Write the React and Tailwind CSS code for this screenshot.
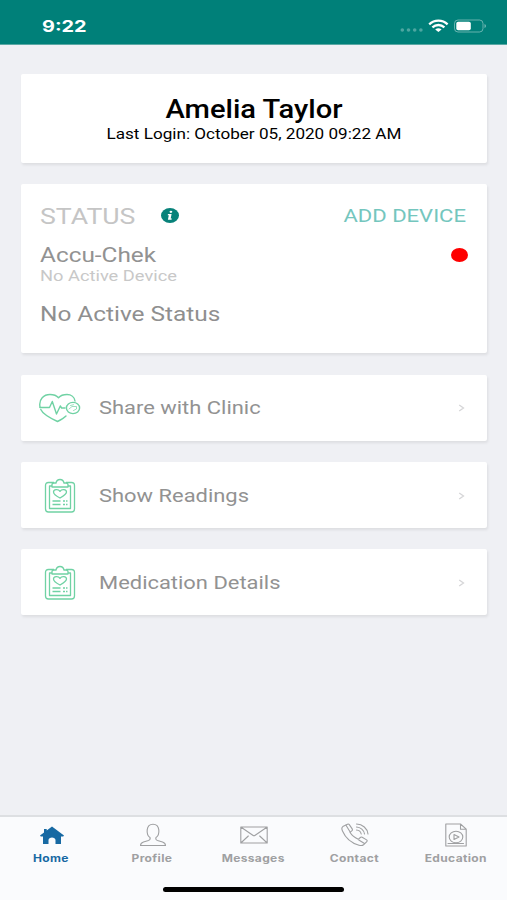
import React from 'react';

const left = 'block w-fit origin-left whitespace-nowrap';
const card = 'bg-white rounded-[2px] shadow-[1px_2px_3px_rgba(0,0,0,0.08)]';

function HeartIcon() {
  return (
    <svg className="h-[30px] w-[42px]" viewBox="0 0 42 30" fill="none" stroke="#70d2a4" strokeWidth="1.400" strokeLinecap="round" strokeLinejoin="round">
      <path d="M1 14C-.5 6 5 1.500 11 1.500c4 0 6.500 1 8.500 3.200C21.500 2.500 24 1.500 28 1.500c4 0 7.500 2.500 8 6.500" />
      <path d="M1.800 16.500C4 21.500 11 25 18.500 28.500c3-1.500 6-3 8.500-5.500" />
      <path d="M1 14.500h9.500l2.800-6L17.500 21l3.800-8 1.300 2H26" />
      <ellipse cx="34" cy="15" rx="6.600" ry="5.600" />
      <path d="M30 16l3-2.500h4.500V16l-3 1.500M31.500 12.500l3-.8" strokeWidth=".7" />
    </svg>
  );
}

function ClipboardIcon() {
  return (
    <svg className="h-[36px] w-[32px]" viewBox="0 0 32 36" fill="none" stroke="#70d2a4" strokeWidth="1.300" strokeLinejoin="round">
      <path d="M10 4.500H4.500C2.500 4.500 1.500 5.500 1.500 7.500v23.500c0 2 1 3 3 3h23c2 0 3-1 3-3V7.500c0-2-1-3-3-3H22" />
      <path d="M8 8H5.500V30.500h21V8H24" />
      <path d="M8 9V6.500c0-1 .7-1.500 2-1.500h2c.5-2.500 2-3.500 4-3.500s3.500 1 4 3.500h2c1.300 0 2 .5 2 1.500V9z" />
      <path d="M16 20c-4.500-2.300-6.500-3.900-6.500-6 0-2.900 4.800-3.200 6.500-.6 1.700-2.600 6.500-2.300 6.500.6 0 2.100-2.500 3.700-6.500 6z" />
      <path d="M8.500 23h8M8.500 26.500h8M19 23h2M22 23h1.500M19 26.500h2M22 26.500h1.500" />
    </svg>
  );
}

function Row({ icon, children }) {
  return (
    <div className={`${card} flex h-[66px] items-center pl-[17px] pr-[22px] pt-px`}>
      <div className="flex w-[43px] justify-center">{icon}</div>
      <div className="ml-[18px] flex-1 text-[18.500px] leading-6 text-[#929292]">
        <span className={`${left} scale-x-[1.185]`}>{children}</span>
      </div>
      <svg className="h-2 w-[7px]" viewBox="0 0 7 8" fill="none" stroke="#d6d6d8" strokeWidth="1.300">
        <path d="M1.200 1 5.500 4 1.200 7" />
      </svg>
    </div>
  );
}

function Tab({ icon, label, active }) {
  return (
    <div className={`flex flex-1 flex-col items-center ${active ? 'text-[#1769a3]' : 'text-[#9fa0a2]'}`}>
      <div className="flex h-[26px] items-center">{icon}</div>
      <span className="mt-[3px] block scale-x-[1.2] pr-[1px] text-[10px] font-bold leading-[14px] tracking-[0.300px]">{label}</span>
    </div>
  );
}

const line = { fill: 'none', stroke: 'currentColor', strokeWidth: 1.1, strokeLinejoin: 'round', strokeLinecap: 'round' };

export default function App() {
  return (
    <div className="flex h-[900px] w-[507px] flex-col overflow-hidden bg-[#eff0f4] font-['Roboto',sans-serif]">
      <header className="flex h-[45px] items-center justify-between border-b border-[#5aa8a4] bg-[#008079] pl-[42px] pr-[20px] pt-[7px]">
        <span className="block origin-left scale-x-[1.240] font-['Inter',sans-serif] text-[16px] font-bold leading-5 text-white">9:22</span>
        <svg className="h-[16px] w-[88px]" viewBox="0 0 88 16">
          <g fill="#fff" fillOpacity=".3">
            <circle cx="3.300" cy="12" r="1.800" /><circle cx="9.500" cy="12" r="1.800" /><circle cx="15.700" cy="12" r="1.800" /><circle cx="21.900" cy="12" r="1.800" />
          </g>
          <g transform="translate(-.6 0)">
            <g fill="none" stroke="#fff" strokeWidth="2.300">
              <path d="M30.800 6.300C36 1.400 44 1.400 49.200 6.300" />
              <path d="M34 9.400c3.500-3.200 8.500-3.200 12 0" />
            </g>
            <path d="M36.800 11.500c2-1.600 4.400-1.600 6.400 0L40 14.100z" fill="#fff" />
          </g>
          <rect x="55.500" y="2" width="28.500" height="12" rx="3.500" fill="none" stroke="#fff" strokeOpacity=".4" />
          <rect x="57.300" y="3.700" width="14.500" height="8.600" rx="1.800" fill="#fff" />
          <path d="M85.500 6c2 .8 2 3.200 0 4z" fill="#fff" fillOpacity=".45" />
        </svg>
      </header>

      <main className="flex flex-1 flex-col gap-[21.300px] pl-[21px] pr-[20px] pt-[28.700px]">
        <section className={`${card} flex h-[89px] flex-col items-center pt-[21px] text-black`}>
          <h1 className="scale-x-[1.165] whitespace-nowrap text-[25px] font-medium leading-[30px]">Amelia Taylor</h1>
          <p className="scale-x-[1.180] whitespace-nowrap text-[14.500px] leading-[20px]">Last Login: October 05, 2020 09:22 AM</p>
        </section>

        <section className={`${card} flex h-[169.500px] flex-col pl-[19px] pr-[20px] pt-[18px]`}>
          <div className="flex h-[28px] items-center">
            <div className="w-[121px] pt-[2px] text-[22.500px] text-[#c5c5c5]"><span className={`${left} scale-x-[1.185]`}>STATUS</span></div>
            <svg className="h-[15px] w-[18px]" viewBox="0 0 18 15">
              <ellipse cx="9" cy="7.500" rx="9" ry="7.500" fill="#08827a" />
              <g fill="#fff"><ellipse cx="9.900" cy="3.800" rx="1.400" ry="1.100" /><path d="M7 6h3.600L9.700 10.600h1.200l-.4 1.200H6.900l.9-4.600H6.700z" /></g>
            </svg>
            <span className="ml-auto mr-px block origin-right scale-x-[1.190] whitespace-nowrap pt-[2px] text-[18.500px] text-[#74c6be]">ADD DEVICE</span>
          </div>
          <div className="mt-[12px] flex h-[26px] items-center justify-between text-[21px] text-[#929292]">
            <span className={`${left} scale-x-[1.160] pt-[2px]`}>Accu-Chek</span>
            <span className="mr-[-1px] block h-[14.500px] w-[17.500px] rounded-[50%] bg-[#fe0000]" />
          </div>
          <div className="pt-px text-[14.500px] leading-[16px] text-[#c8c8c8]"><span className={`${left} scale-x-[1.260]`}>No Active Device</span></div>
          <div className="mt-[16px] text-[20.500px] leading-[26px] text-[#8f8f8f]"><span className={`${left} scale-x-[1.190]`}>No Active Status</span></div>
        </section>

        <Row icon={<HeartIcon />}>Share with Clinic</Row>
        <Row icon={<ClipboardIcon />}>Show Readings</Row>
        <Row icon={<ClipboardIcon />}>Medication Details</Row>
      </main>

      <nav className="flex h-[85px] flex-col border-t-2 border-[#dddfe2] bg-[#fafbfd]">
        <div className="flex pl-px pt-[5px] font-['Inter',sans-serif]">
          <Tab active label="Home" icon={
            <svg className="h-[19px] w-[24px]" viewBox="0 0 24 19" fill="currentColor">
              <path d="M12 .5 24 9.500l-.8 1H21V18H15.500v-4c0-3.500-7-3.500-7 0v4H3v-7.500H.8L0 9.500 4 6.500V3h2.700v1.500z" />
            </svg>} />
          <Tab label="Profile" icon={
            <svg className="h-[24px] w-[28px]" viewBox="0 0 28 24" {...line}>
              <path d="M11 14.500C7 12 6.500 1.200 14 1.200S21 12 17 14.500c-.5 1.500 0 2.500 1.500 3l5 1.500c2 .7 3 2 3 3.500h-25c0-1.500 1-2.800 3-3.500l5-1.500c1.500-.5 2-1.500 1.500-3z" />
            </svg>} />
          <Tab label="Messages" icon={
            <svg className="h-[18px] w-[28px]" viewBox="0 0 28 18" {...line}>
              <path d="M.8 1h26.400v16H.8zM.8 1l12 8.300q1.200.8 2.400 0L27.200 1M.8 17l7.500-7M27.200 17l-7.500-7" />
            </svg>} />
          <Tab label="Contact" icon={
            <svg className="h-[24px] w-[28px]" viewBox="0 0 28 24" {...line}>
              <path d="M6.500 1.200 1.800 3.600C.6 4.500.8 6.500 1.500 8c3 7 8.500 12 16.500 14.200 1.800.5 3.500.4 4.500-.4l3.300-3.200c.6-.6.5-1.200-.2-1.700l-4.400-2.600c-.7-.4-1.400-.3-1.900.2l-2 1.800C13.500 14.500 10.500 12 9 9.300l2-1.700c.5-.5.6-1 .2-1.700L8.300 1.600c-.4-.6-1-.8-1.800-.4z" />
              <path d="m5 2.200 4 6.500M17.800 17l5.700 3.500M15.500 1c6 .2 11 4.500 11.500 10M15.500 4c4 .2 7.500 3 8 7M15.500 7c2.500.2 4.300 1.700 4.700 4" />
            </svg>} />
          <Tab label="Education" icon={
            <svg className="h-[24px] w-[22px]" viewBox="0 0 22 24" {...line}>
              <path d="M15.500 1H.8v22h20.400V6.200zM15.500 1v5.200h5.700" />
              <ellipse cx="11" cy="14" rx="6.800" ry="5.800" />
              <path d="m9 11.500 5 2.500-5 2.500zM3 20.500h15.500" />
            </svg>} />
        </div>
        <div className="mx-auto mt-[22px] h-[5px] w-[181px] rounded-full bg-black" />
      </nav>
    </div>
  );
}
